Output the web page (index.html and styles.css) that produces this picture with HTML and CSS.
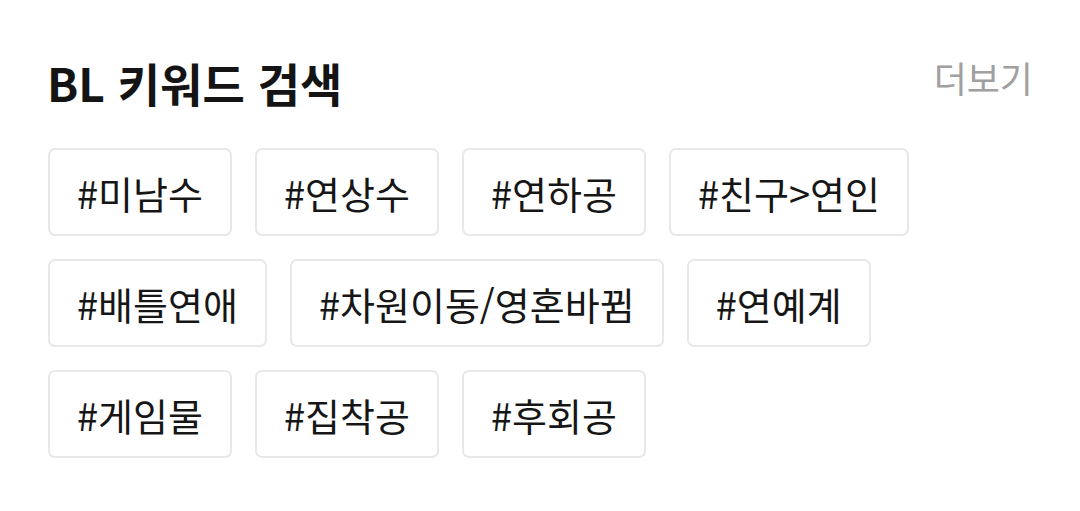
FILE: index.html
```html
<!DOCTYPE html>
<html lang="ko">
<head>
<meta charset="utf-8">
<link rel="stylesheet" href="styles.css">
</head>
<body>
<section class="section">
  <header class="head">
    <h2 class="title">BL 키워드 검색</h2>
    <a class="more">더보기</a>
  </header>
  <div class="tags">
    <div class="row">
      <span class="tag">#미남수</span>
      <span class="tag">#연상수</span>
      <span class="tag">#연하공</span>
      <span class="tag">#친구&gt;연인</span>
    </div>
    <div class="row">
      <span class="tag">#배틀연애</span>
      <span class="tag">#차원이동/영혼바뀜</span>
      <span class="tag">#연예계</span>
    </div>
    <div class="row">
      <span class="tag">#게임물</span>
      <span class="tag">#집착공</span>
      <span class="tag">#후회공</span>
    </div>
  </div>
</section>
</body>
</html>
```
FILE: styles.css
```css
html, body {
  margin: 0;
  padding: 0;
  background: #ffffff;
}
body {
  width: 1080px;
  height: 511px;
  overflow: hidden;
  font-family: "Noto Sans CJK KR", "Noto Sans", sans-serif;
  color: #1a1a1a;
}
.section {
  padding: 54px 47px 0 47px;
}
.head {
  display: flex;
  justify-content: space-between;
  align-items: center;
  height: 56px;
}
.title {
  margin: 0;
  font-size: 46px;
  font-weight: 700;
  color: #141414;
}
.more {
  font-size: 36px;
  color: #a0a0a0;
  margin-top: -10px;
}
.tags {
  margin-top: 38px;
  margin-left: 1px;
  display: flex;
  flex-direction: column;
  gap: 23px;
}
.row {
  display: flex;
  gap: 23px;
}
.tag {
  box-sizing: border-box;
  height: 88px;
  display: flex;
  align-items: center;
  padding: 0 27px;
  border: 2px solid #e8e8e8;
  border-radius: 7px;
  font-size: 38px;
  color: #161616;
}
```
